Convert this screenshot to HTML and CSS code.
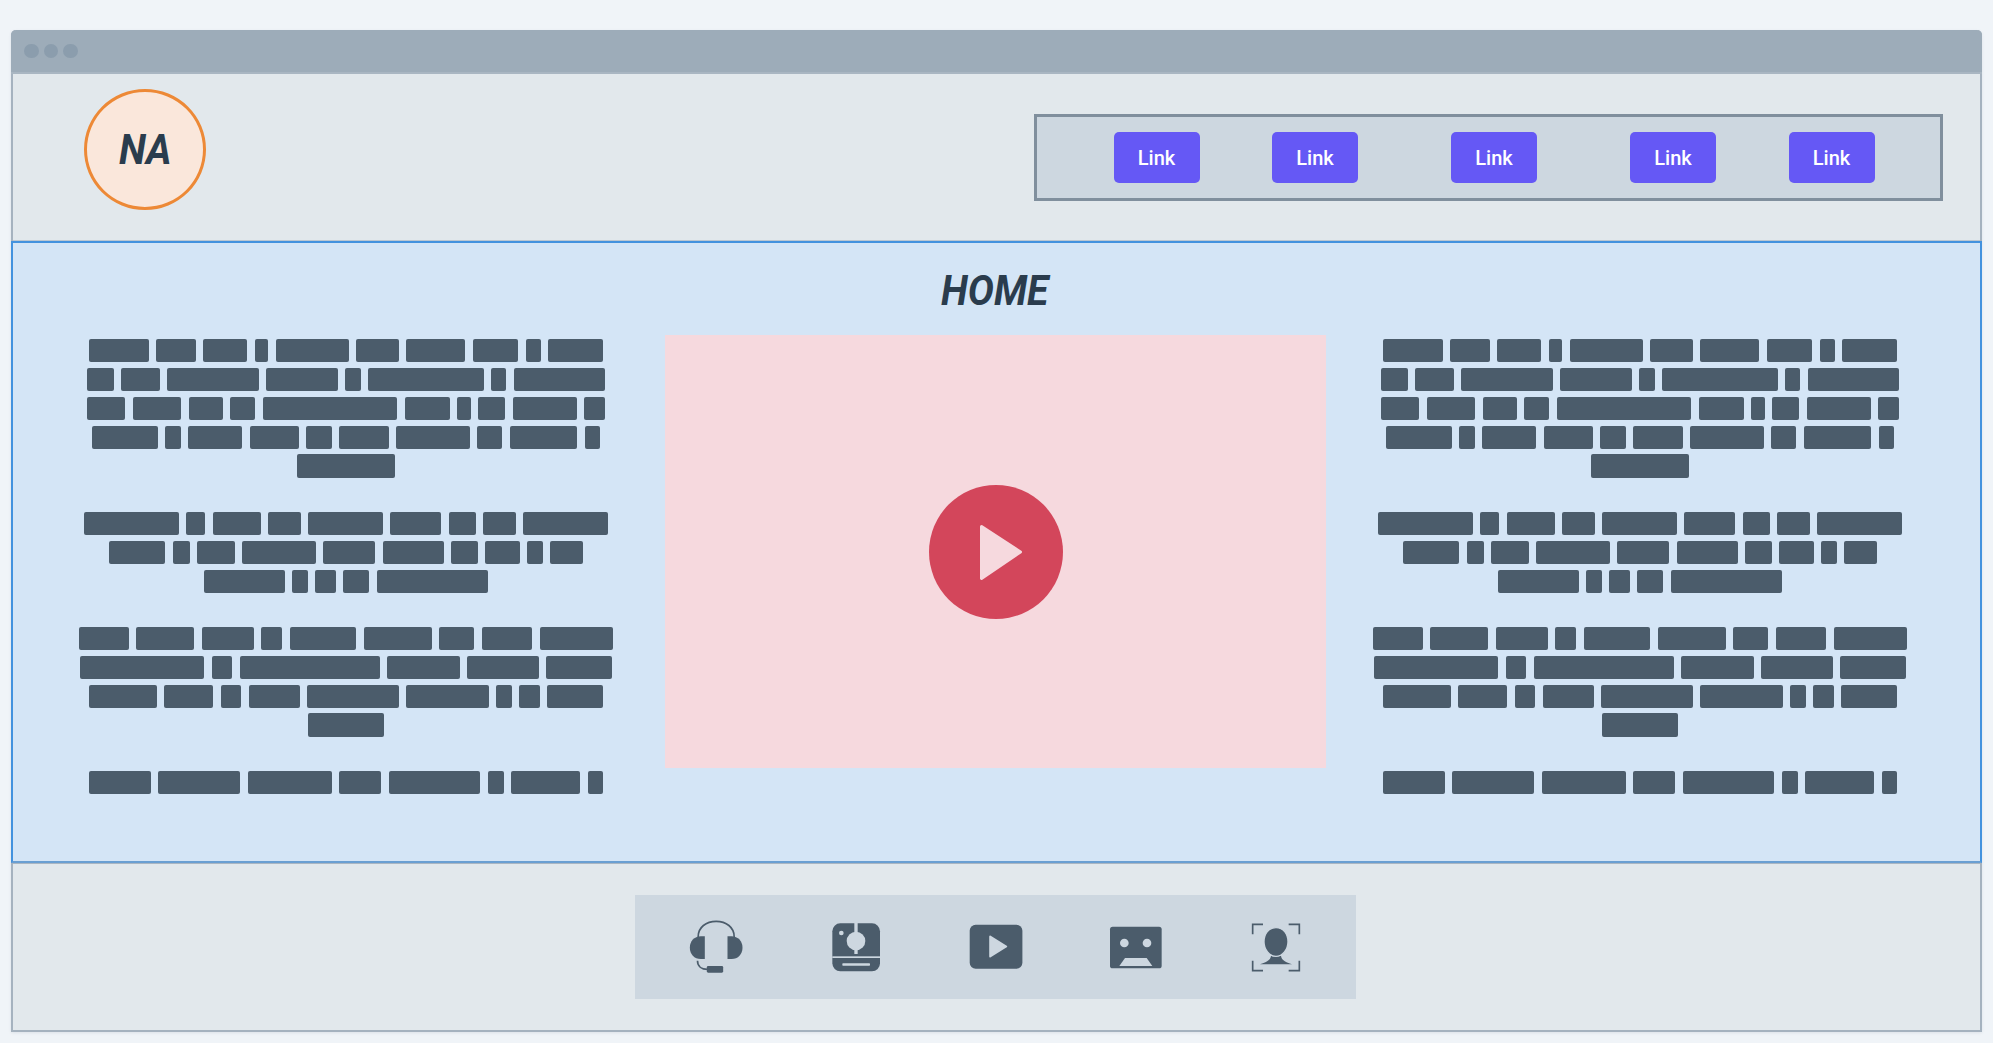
FILE: index.html
```html
<!DOCTYPE html>
<html lang="en">
<head>
<meta charset="utf-8">
<title>Home</title>
<link rel="stylesheet" href="styles.css">
</head>
<body>
<div class="frame">
  <div class="titlebar"><i class="dot"></i><i class="dot"></i><i class="dot"></i></div>
  <header class="header">
    <div class="logo"><span class="logo-text">NA</span></div>
    <nav class="nav">
      <a class="link">Link</a>
      <a class="link">Link</a>
      <a class="link wide">Link</a>
      <a class="link wide">Link</a>
      <a class="link">Link</a>
    </nav>
  </header>
  <main class="main">
    <h1 class="title"><span class="title-text">HOME</span></h1>
    <div class="content">
      <div class="col">
        <div class="para">
          <div class="row"><b style="width:59.9px"></b><b style="width:39.6px"></b><b style="width:44px"></b><b style="width:13.7px"></b><b style="width:72.9px"></b><b style="width:42.9px"></b><b style="width:58.8px"></b><b style="width:45.5px"></b><b style="width:15.2px"></b><b style="width:54.8px"></b></div>
          <div class="row"><b style="width:27.4px"></b><b style="width:38.1px"></b><b style="width:91.8px"></b><b style="width:71.8px"></b><b style="width:15.5px"></b><b style="width:115.4px"></b><b style="width:15.2px"></b><b style="width:91.8px"></b></div>
          <div class="row"><b style="width:38.1px"></b><b style="width:48.5px"></b><b style="width:34px"></b><b style="width:25.2px"></b><b style="width:134.7px"></b><b style="width:45.1px"></b><b style="width:13.7px"></b><b style="width:27px"></b><b style="width:64.4px"></b><b style="width:20.3px"></b></div>
          <div class="row"><b style="width:65.9px"></b><b style="width:15.5px"></b><b style="width:54.4px"></b><b style="width:49.2px"></b><b style="width:25.2px"></b><b style="width:49.9px"></b><b style="width:73.6px"></b><b style="width:25.2px"></b><b style="width:67.3px"></b><b style="width:15.5px"></b></div>
          <div class="row"><b style="width:98.4px"></b></div>
        </div>
        <div class="para">
          <div class="row"><b style="width:95.1px"></b><b style="width:19.2px"></b><b style="width:48.1px"></b><b style="width:32.6px"></b><b style="width:74.7px"></b><b style="width:51.1px"></b><b style="width:27.4px"></b><b style="width:32.6px"></b><b style="width:85.1px"></b></div>
          <div class="row"><b style="width:56.2px"></b><b style="width:17px"></b><b style="width:37.7px"></b><b style="width:73.3px"></b><b style="width:52.5px"></b><b style="width:61px"></b><b style="width:26.6px"></b><b style="width:34.8px"></b><b style="width:15.5px"></b><b style="width:32.6px"></b></div>
          <div class="row"><b style="width:80.3px"></b><b style="width:15.9px"></b><b style="width:20.7px"></b><b style="width:25.9px"></b><b style="width:111px"></b></div>
        </div>
        <div class="para">
          <div class="row"><b style="width:49.2px"></b><b style="width:58.1px"></b><b style="width:52.2px"></b><b style="width:21.1px"></b><b style="width:66.6px"></b><b style="width:68.1px"></b><b style="width:35.1px"></b><b style="width:50.7px"></b><b style="width:72.9px"></b></div>
          <div class="row"><b style="width:123.9px"></b><b style="width:20.7px"></b><b style="width:139.8px"></b><b style="width:72.9px"></b><b style="width:71.4px"></b><b style="width:65.5px"></b></div>
          <div class="row"><b style="width:67.7px"></b><b style="width:49.6px"></b><b style="width:20.3px"></b><b style="width:51.4px"></b><b style="width:91.4px"></b><b style="width:82.5px"></b><b style="width:15.5px"></b><b style="width:20.7px"></b><b style="width:56.2px"></b></div>
          <div class="row"><b style="width:75.1px"></b></div>
        </div>
        <div class="para">
          <div class="row"><b style="width:62.2px"></b><b style="width:81.8px"></b><b style="width:84.4px"></b><b style="width:41.8px"></b><b style="width:91.8px"></b><b style="width:15.9px"></b><b style="width:69.2px"></b><b style="width:15.5px"></b></div>
        </div>
      </div>
      <div class="video">
        <svg class="play" viewBox="0 0 134 134" aria-hidden="true">
          <circle cx="67" cy="67" r="67" class="play-disc"/>
          <path d="M52.5 41.5 L91.5 67 L52.5 93.5 Z" class="play-tri"/>
        </svg>
      </div>
      <div class="col">
        <div class="para">
          <div class="row"><b style="width:59.9px"></b><b style="width:39.6px"></b><b style="width:44px"></b><b style="width:13.7px"></b><b style="width:72.9px"></b><b style="width:42.9px"></b><b style="width:58.8px"></b><b style="width:45.5px"></b><b style="width:15.2px"></b><b style="width:54.8px"></b></div>
          <div class="row"><b style="width:27.4px"></b><b style="width:38.1px"></b><b style="width:91.8px"></b><b style="width:71.8px"></b><b style="width:15.5px"></b><b style="width:115.4px"></b><b style="width:15.2px"></b><b style="width:91.8px"></b></div>
          <div class="row"><b style="width:38.1px"></b><b style="width:48.5px"></b><b style="width:34px"></b><b style="width:25.2px"></b><b style="width:134.7px"></b><b style="width:45.1px"></b><b style="width:13.7px"></b><b style="width:27px"></b><b style="width:64.4px"></b><b style="width:20.3px"></b></div>
          <div class="row"><b style="width:65.9px"></b><b style="width:15.5px"></b><b style="width:54.4px"></b><b style="width:49.2px"></b><b style="width:25.2px"></b><b style="width:49.9px"></b><b style="width:73.6px"></b><b style="width:25.2px"></b><b style="width:67.3px"></b><b style="width:15.5px"></b></div>
          <div class="row"><b style="width:98.4px"></b></div>
        </div>
        <div class="para">
          <div class="row"><b style="width:95.1px"></b><b style="width:19.2px"></b><b style="width:48.1px"></b><b style="width:32.6px"></b><b style="width:74.7px"></b><b style="width:51.1px"></b><b style="width:27.4px"></b><b style="width:32.6px"></b><b style="width:85.1px"></b></div>
          <div class="row"><b style="width:56.2px"></b><b style="width:17px"></b><b style="width:37.7px"></b><b style="width:73.3px"></b><b style="width:52.5px"></b><b style="width:61px"></b><b style="width:26.6px"></b><b style="width:34.8px"></b><b style="width:15.5px"></b><b style="width:32.6px"></b></div>
          <div class="row"><b style="width:80.3px"></b><b style="width:15.9px"></b><b style="width:20.7px"></b><b style="width:25.9px"></b><b style="width:111px"></b></div>
        </div>
        <div class="para">
          <div class="row"><b style="width:49.2px"></b><b style="width:58.1px"></b><b style="width:52.2px"></b><b style="width:21.1px"></b><b style="width:66.6px"></b><b style="width:68.1px"></b><b style="width:35.1px"></b><b style="width:50.7px"></b><b style="width:72.9px"></b></div>
          <div class="row"><b style="width:123.9px"></b><b style="width:20.7px"></b><b style="width:139.8px"></b><b style="width:72.9px"></b><b style="width:71.4px"></b><b style="width:65.5px"></b></div>
          <div class="row"><b style="width:67.7px"></b><b style="width:49.6px"></b><b style="width:20.3px"></b><b style="width:51.4px"></b><b style="width:91.4px"></b><b style="width:82.5px"></b><b style="width:15.5px"></b><b style="width:20.7px"></b><b style="width:56.2px"></b></div>
          <div class="row"><b style="width:75.1px"></b></div>
        </div>
        <div class="para">
          <div class="row"><b style="width:62.2px"></b><b style="width:81.8px"></b><b style="width:84.4px"></b><b style="width:41.8px"></b><b style="width:91.8px"></b><b style="width:15.9px"></b><b style="width:69.2px"></b><b style="width:15.5px"></b></div>
        </div>
      </div>
    </div>
  </main>
  <footer class="footer">
    <div class="icons">
      <svg class="icon" viewBox="167.5 81 180 180" aria-hidden="true">
        <path class="ink-line" d="M204 145 V140 C204 112 228 94 258 94 C288 94 312 112 312 140 V145"/>
        <path class="ink" d="M224 139 V207 H212 C192 207 179 192 179 173 C179 154 192 139 212 139 Z"/>
        <path class="ink" d="M292 139 V207 H304 C324 207 337 192 337 173 C337 154 324 139 304 139 Z"/>
        <path class="ink-line" d="M202 212 C202 228 214 238 232 238"/>
        <rect class="ink" x="230" y="228" width="49" height="20" rx="4"/>
      </svg>
      <svg class="icon" viewBox="588 81 180 180" aria-hidden="true">
        <rect class="ink" x="607" y="100" width="143" height="144" rx="24"/>
        <rect class="cut" x="607" y="199" width="143" height="5"/>
        <rect class="cut" x="673" y="98" width="10" height="30"/>
        <rect class="cut" x="673" y="176" width="10" height="16"/>
        <circle class="cut" cx="678" cy="153" r="28"/>
        <circle class="cut" cx="634" cy="129" r="7"/>
        <rect class="cut" x="637" y="220" width="83" height="7" rx="2"/>
      </svg>
      <svg class="icon" viewBox="965.3 917 60 60" aria-hidden="true">
        <rect class="ink" x="969" y="924.7" width="52.7" height="44" rx="6"/>
        <path class="cut cut-round" d="M989.5 936.5 L1005.5 946.5 L989.5 956.5 Z"/>
      </svg>
      <svg class="icon" viewBox="318 81 180 180" aria-hidden="true">
        <rect class="ink" x="330" y="110" width="155" height="125" rx="8"/>
        <circle class="cut" cx="373" cy="159" r="13"/>
        <circle class="cut" cx="441" cy="159" r="13"/>
        <path class="cut" d="M375 204 H440 L457 228 H358 Z"/>
      </svg>
      <svg class="icon" viewBox="735 81 180 180" aria-hidden="true">
        <path class="ink-line" d="M755 133 V103 H786 M863 103 H895 V133 M755 212 V242 H786 M895 212 V242 H863"/>
        <path class="ink" d="M777 223 C795 216 808 212 810 198 H840 C842 212 855 216 873 223 Z"/>
        <path class="ink head" d="M825 113 C848 113 861 133 861 155 C861 178 845 199 825 199 C805 199 789 178 789 155 C789 133 802 113 825 113 Z"/>
      </svg>
    </div>
  </footer>
</div>
</body>
</html>
```

FILE: styles.css
```css
* { box-sizing: border-box; }
html, body { margin: 0; height: 100%; }
body {
  background: #f0f4f8;
  padding: 30px 11px 0;
  font-family: "Roboto", "Liberation Sans", sans-serif;
  overflow: hidden;
}
.frame {
  width: 1971px;
  height: 1002px;
  display: flex;
  flex-direction: column;
  background: #e2e8ec;
  border: 2px solid #a5b2bf;
  border-top: 0;
  border-radius: 5px 5px 0 0;
  box-shadow: 0 1px 3px rgba(90, 110, 130, .12);
}
.titlebar {
  height: 44px;
  margin: 0 -2px;
  padding-left: 13px;
  display: flex;
  align-items: center;
  gap: 5px;
  background: #9dacb9;
  border-bottom: 2px solid #a9b6c2;
  border-radius: 5px 5px 0 0;
}
.dot {
  width: 14.5px;
  height: 14.5px;
  border-radius: 50%;
  background: #8b9dad;
}
.header {
  height: 167px;
  padding: 15px 37px 0 71px;
  display: flex;
  align-items: flex-start;
  justify-content: space-between;
  border-bottom: 1px solid #bcc7d1;
}
.logo {
  width: 122px;
  height: 121px;
  border: 3px solid #ed8936;
  border-radius: 50%;
  background: #fae7db;
  display: flex;
  align-items: center;
  justify-content: center;
}
.logo-text, .title-text {
  display: inline-block;
  font-weight: 700;
  font-style: italic;
  font-size: 42px;
  line-height: 1;
  color: #2a3c4d;
  transform: scaleX(.93);
}
.nav {
  margin-top: 25px;
  width: 909px;
  height: 87px;
  padding-left: 76.5px;
  display: flex;
  align-items: center;
  gap: 72.5px;
  background: #cdd7e0;
  border: 3px solid #808f9d;
}
.link {
  width: 86px;
  height: 51px;
  display: flex;
  align-items: center;
  justify-content: center;
  border-radius: 5px;
  background: #6558f5;
  color: #fff;
  font-size: 20px;
  font-weight: 500;
}
.wide { margin-left: 20.5px; }
.main {
  height: 622px;
  margin: 0 -2px;
  background: #d4e5f6;
  border: 2px solid #4392de;
  border-bottom-color: #6a9fd2;
}
.title {
  height: 92px;
  margin: 0;
  padding: 3px 4px 0 0;
  display: flex;
  align-items: center;
  justify-content: center;
  font-size: 42px;
  font-weight: 700;
}
.content {
  padding-left: 51px;
  display: grid;
  grid-template-columns: 564px 661px 554px;
  column-gap: 37px;
  align-items: start;
}
.col {
  padding-top: 4.3px;
  display: flex;
  flex-direction: column;
  gap: 34.4px;
}
.para {
  display: flex;
  flex-direction: column;
  gap: 5.6px;
}
.row {
  display: flex;
  justify-content: center;
  gap: 7.4px;
}
.row b {
  display: block;
  height: 23.2px;
  border-radius: 2px;
  background: #4b5c6b;
}
.video {
  height: 433px;
  display: flex;
  align-items: center;
  justify-content: center;
  background: #f6d9de;
}
.play { width: 134px; height: 134px; display: block; }
.play-disc { fill: #d3465b; }
.play-tri {
  fill: #f6d9de;
  stroke: #f6d9de;
  stroke-width: 3;
  stroke-linejoin: round;
}
.footer {
  flex: 1;
  padding: 31px 1.5px 0 0;
  display: flex;
  justify-content: center;
  align-items: flex-start;
  border-top: 1px solid #aab6c2;
}
.icons {
  width: 721px;
  height: 104px;
  display: flex;
  align-items: center;
  justify-content: center;
  gap: 80px;
  background: #cdd7e0;
}
.icon { width: 60px; height: 60px; display: block; flex: none; }
.ink { fill: #4b5c6b; }
.ink-line { fill: none; stroke: #4b5c6b; stroke-width: 5; }
.cut { fill: #cdd7e0; }
.cut-round { stroke: #cdd7e0; stroke-width: 2; stroke-linejoin: round; }
.head { stroke: #cdd7e0; stroke-width: 4; }
```
